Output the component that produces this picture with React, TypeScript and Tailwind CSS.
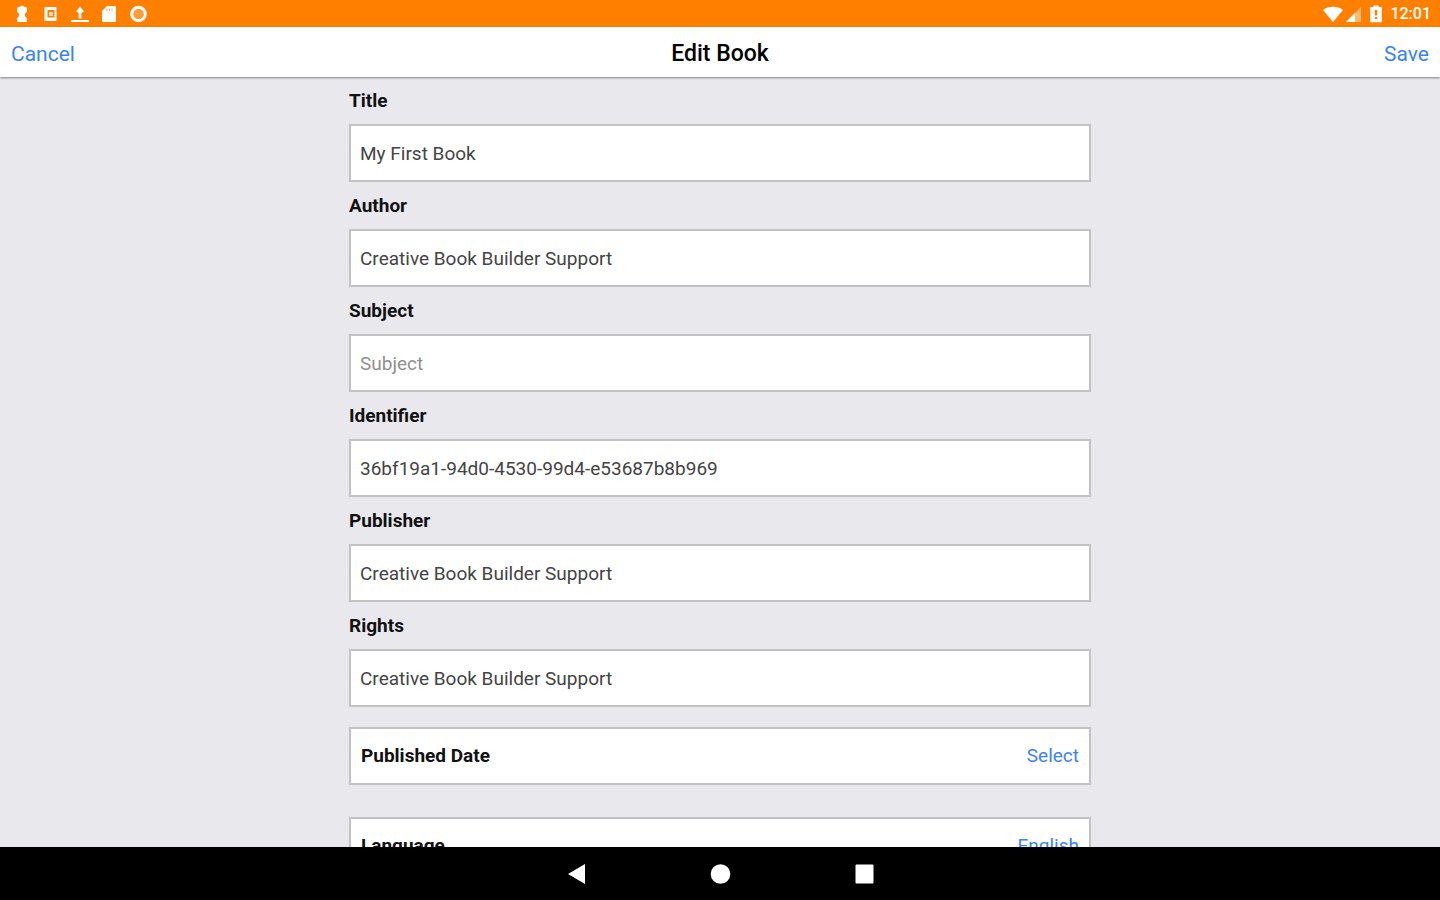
import React from 'react';

interface Field {
  id: string;
  label: string;
  value: string;
}

const FIELDS: Field[] = [
  { id: 'title', label: 'Title', value: 'My First Book' },
  { id: 'author', label: 'Author', value: 'Creative Book Builder Support' },
  { id: 'subject', label: 'Subject', value: '' },
  { id: 'identifier', label: 'Identifier', value: '36bf19a1-94d0-4530-99d4-e53687b8b969' },
  { id: 'publisher', label: 'Publisher', value: 'Creative Book Builder Support' },
  { id: 'rights', label: 'Rights', value: 'Creative Book Builder Support' },
];

function StatusBar() {
  return (
    <div className="flex h-[27px] shrink-0 items-center justify-between bg-[#ff8000] pt-px pr-[9px] pl-3 text-white">
      <div className="flex items-center gap-[9px]" aria-hidden="true">
        {/* keyhole */}
        <svg width="20" height="20" viewBox="0 0 20 20" fill="currentColor">
          <path d="M10 1.500l2.500 1.300 2.300.700v4.500l-2 2 .4 2.500 1.600 1.500v4H5.200v-4l1.600-1.500.4-2.500-2-2V3.500l2.300-.7z" />
        </svg>
        {/* boxed app */}
        <svg width="20" height="20" viewBox="0 0 20 20" fill="currentColor" fillRule="evenodd">
          <path d="M4.500 3h10a1 1 0 0 1 1 1v12a1 1 0 0 1-1 1h-10a1 1 0 0 1-1-1V4a1 1 0 0 1 1-1zM6.500 6v7.500h7V6z" />
          <path d="M8 8h4v4H8z" opacity=".7" />
        </svg>
        {/* upload */}
        <svg width="20" height="20" viewBox="0 0 20 20" fill="currentColor">
          <path d="M10 2.500l4 5-2.600 1.300V14.500H8.600V8.800L6 7.500zM1 16h18v2H1z" />
        </svg>
        {/* sd card */}
        <svg width="20" height="20" viewBox="0 0 20 20" fill="currentColor">
          <path d="M8 2h7.500A1.500 1.500 0 0 1 17 3.500v13a1.500 1.500 0 0 1-1.500 1.500h-11A1.500 1.500 0 0 1 3 16.500V7z" />
          <path d="M8 4.500v2.500M10.500 4.500v2.500M13 4.500v2.500" stroke="#ff8000" strokeWidth="1" opacity=".6" />
        </svg>
        {/* sync ring */}
        <svg width="20" height="20" viewBox="0 0 20 20">
          <circle cx="10.500" cy="10" r="6.800" fill="#ff9c38" stroke="currentColor" strokeWidth="3" />
        </svg>
      </div>
      <div className="flex items-center">
        <svg width="20" height="18" viewBox="0 0 20 18" fill="currentColor" aria-hidden="true">
          <path d="M0 5C5.500 .800 14.500 .800 20 5L10 17z" />
        </svg>
        <svg className="ml-0.5" width="17" height="18" viewBox="0 0 17 18" fill="currentColor" aria-hidden="true">
          <path d="M1 17L16 2v15z" opacity=".45" />
          <path d="M1 17L10 8v9z" />
        </svg>
        <svg className="ml-2" width="12" height="18" viewBox="0 0 12 18" aria-hidden="true">
          <path d="M3.500 .500h5V2H11a.8.8 0 0 1 .8.800V16.500a.8.8 0 0 1-.8.800H1a.8.8 0 0 1-.8-.800V2.800A.8.8 0 0 1 1 2h2.500z" fill="currentColor" />
          <path d="M4.800 5h2.400v5.500H4.800zM4.800 12h2.400v2H4.800z" fill="#ff8000" />
        </svg>
        <span className="ml-2 text-base leading-5 font-medium">12:01</span>
      </div>
    </div>
  );
}

function TextField({ field }: { field: Field }) {
  return (
    <div>
      <label htmlFor={field.id} className="block h-[47px] pt-3 text-[19px] leading-6 font-bold text-[#111]">
        {field.label}
      </label>
      <input
        id={field.id}
        type="text"
        defaultValue={field.value}
        placeholder={field.label}
        className="block h-[58px] w-full border-2 border-[#c2c2c4] bg-white px-[9px] text-[19px] text-[#444] outline-none placeholder:text-[#909090]"
      />
    </div>
  );
}

function PickerRow({ label, value }: { label: string; value: string }) {
  return (
    <div className="flex h-[58px] items-center justify-between border-2 border-[#c2c2c4] bg-white px-[10px] text-[19px] leading-6">
      <span className="font-bold text-[#111]">{label}</span>
      <button type="button" aria-label={`${label}: ${value}`} className="text-[#3b82f6]">
        {value}
      </button>
    </div>
  );
}

export default function App() {
  return (
    <div className="flex h-screen flex-col overflow-hidden bg-[#e9e8ed] font-[Roboto,'Liberation_Sans',sans-serif]">
      <StatusBar />
      <header className="z-10 grid h-[50px] shrink-0 grid-cols-3 items-center bg-white px-[11px] pt-[3px] text-[21px] leading-6 shadow-[0_1px_2px_rgba(0,0,0,0.45)]">
        <button type="button" className="justify-self-start text-[#3b82f6]">
          Cancel
        </button>
        <h1 className="justify-self-center text-[23px] font-medium text-black">Edit Book</h1>
        <button type="button" className="justify-self-end text-[#3b82f6]">
          Save
        </button>
      </header>

      <main className="min-h-0 flex-1 overflow-y-auto [scrollbar-width:none]">
        <form className="mx-auto w-full max-w-[742px]">
          {FIELDS.map((field) => (
            <TextField key={field.id} field={field} />
          ))}
          <div className="space-y-8 py-5">
            <PickerRow label="Published Date" value="Select" />
            <PickerRow label="Language" value="English" />
          </div>
        </form>
      </main>

      <nav className="flex h-[53px] shrink-0 items-center justify-center gap-[120px] bg-black text-white">
        <button type="button" aria-label="Back">
          <svg width="24" height="24" viewBox="0 0 24 24" fill="currentColor">
            <path d="M4 12L21 2v20z" />
          </svg>
        </button>
        <button type="button" aria-label="Home">
          <svg width="24" height="24" viewBox="0 0 24 24" fill="currentColor">
            <circle cx="12.500" cy="12" r="9.800" />
          </svg>
        </button>
        <button type="button" aria-label="Recent apps">
          <svg width="24" height="24" viewBox="0 0 24 24" fill="currentColor">
            <rect x="3.500" y="2.500" width="18" height="19" rx="1" />
          </svg>
        </button>
      </nav>
    </div>
  );
}
